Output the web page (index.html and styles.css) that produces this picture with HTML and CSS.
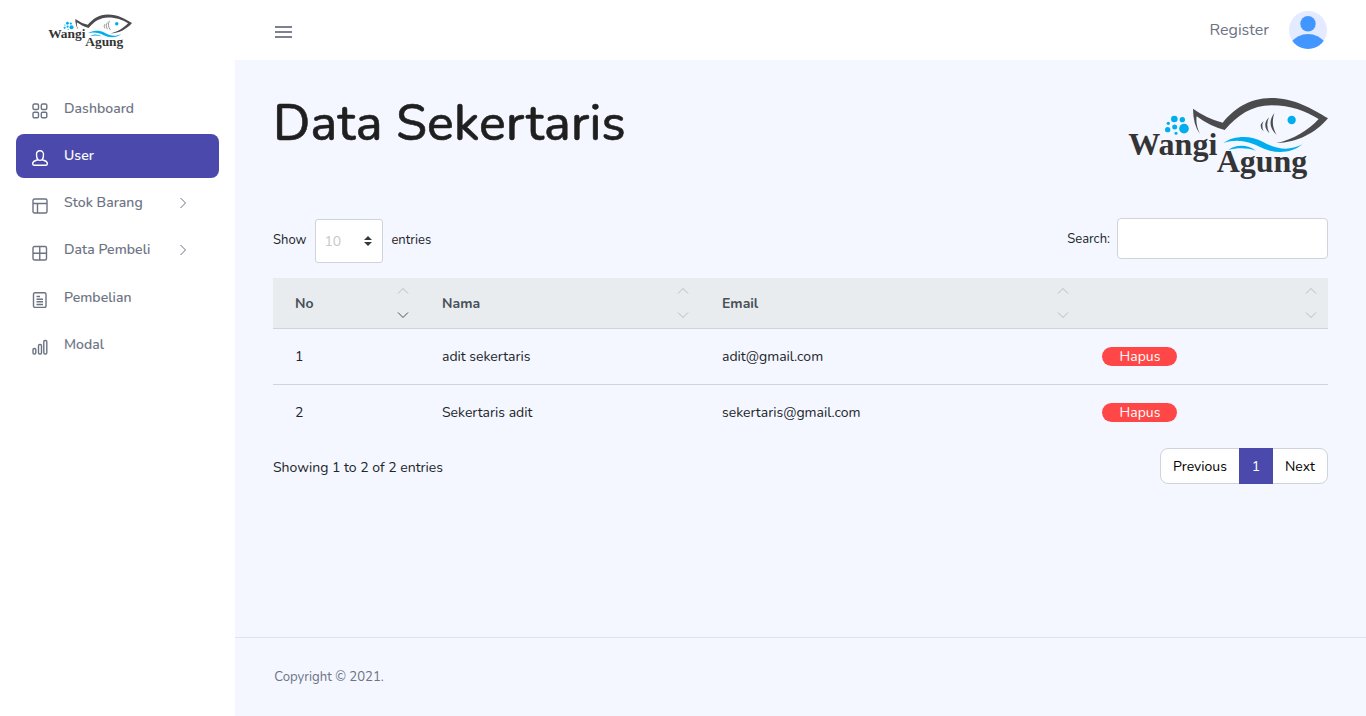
FILE: index.html
```html
<!DOCTYPE html>
<html lang="id">
<head>
<meta charset="utf-8">
<title>Data Sekertaris</title>
<link rel="stylesheet" href="styles.css">
</head>
<body>
<div class="app">
  <aside class="sidebar">
    <a class="brand"><svg width="84" height="34.500" viewBox="54 36 600 246">
      <path fill="#4b4b4d" d="M249 71Q291 101 338 113C370 73 418 39 482 39C553 39 604 70 654 100C619 142 562 174 499 174C553 163 594 136 626 102C583 77 544 61 484 61C426 61 382 91 344 135Q300 124 260 94Q256 118 270 147Q249 119 249 71Z"/>
      <path fill="none" stroke="#4b4b4d" stroke-width="4" d="M461 108Q448 123 461 139M477 97Q461 120 478 145M493 84Q475 119 500 150"/>
      <g fill="#00adef">
        <circle cx="545" cy="105" r="12.500"/>
        <circle cx="193" cy="102" r="10"/><circle cx="217" cy="104" r="8"/><circle cx="175" cy="115" r="5"/>
        <circle cx="173" cy="134" r="8"/><circle cx="194" cy="126" r="7.500"/><circle cx="222" cy="131" r="14.500"/><circle cx="198" cy="145" r="4.500"/>
        <path d="M340 174C370 151 423 150 458 170C500 193 536 199 577 178C545 206 493 208 452 187C414 167 379 161 340 174Z"/>
        <path d="M355 195C378 178 413 178 438 197C409 187 380 188 355 195Z"/>
      </g>
      <g class="logo-text">
        <text x="55" y="210" textLength="267" lengthAdjust="spacingAndGlyphs">Wangi</text>
        <text x="320" y="262" textLength="272" lengthAdjust="spacingAndGlyphs">Agung</text>
      </g>
    </svg></a>
    <nav class="menu">
      <a class="item"><svg class="icon" viewBox="0 0 16 16"><rect x="1" y="1" width="5.500" height="5.500" rx="1.300"/><rect x="9.300" y="1" width="5.500" height="5.500" rx="1.300"/><rect x="1" y="9.300" width="5.500" height="5.500" rx="1.300"/><rect x="9.300" y="9.300" width="5.500" height="5.500" rx="1.300"/></svg><span>Dashboard</span></a>
      <a class="item active"><svg class="icon" viewBox="0 0 16 16"><path d="M8 .8C5.600.8 4.500 2.400 4.500 4.700C4.500 6.800 5 8.400 5.700 9.500C5.700 10.300.6 10.500.6 13.400C.6 14.700 1.200 15.200 2.200 15.200H13.800C14.800 15.200 15.400 14.700 15.400 13.400C15.400 10.500 10.300 10.300 10.300 9.500C11 8.400 11.500 6.800 11.500 4.700C11.500 2.400 10.400.8 8 .8ZM5.700 9.500Q8 11.300 10.300 9.500"/></svg><span>User</span></a>
      <a class="item"><svg class="icon" viewBox="0 0 16 16"><rect x="1" y="1" width="14" height="14" rx="1.500"/><path d="M1 5.500H15M5.500 5.500V15"/></svg><span>Stok Barang</span><svg class="chev" viewBox="0 0 8 12"><path d="M1.500 1L6.500 6L1.500 11"/></svg></a>
      <a class="item"><svg class="icon" viewBox="0 0 16 16"><rect x="1" y="1.500" width="13.500" height="13.500" rx="1.500"/><path d="M1 8.200H14.500M7.750 1.500V15"/></svg><span>Data Pembeli</span><svg class="chev" viewBox="0 0 8 12"><path d="M1.500 1L6.500 6L1.500 11"/></svg></a>
      <a class="item"><svg class="icon" viewBox="0 0 16 16"><rect x="1.500" y=".8" width="12.500" height="14.700" rx="1.500"/><path d="M4.500 4.500H8M4.500 7.200H11M4.500 9.800H11M4.500 12.500H11"/></svg><span>Pembelian</span></a>
      <a class="item"><svg class="icon" viewBox="0 0 16 16"><rect x="1" y="9.500" width="2.800" height="5.500" rx="1.200"/><rect x="6.500" y="5.500" width="3" height="9.500" rx="1.200"/><rect x="11.800" y="1.500" width="3" height="13.500" rx="1.200"/></svg><span>Modal</span></a>
    </nav>
  </aside>

  <div class="main">
    <header class="topbar">
      <svg class="burger" viewBox="0 0 17 13"><path d="M0 1H17M0 6H17M0 11H17"/></svg>
      <div class="account">
        <a class="register">Register</a>
        <svg class="avatar" viewBox="0 0 38 38"><clipPath id="round"><circle cx="19" cy="19" r="19"/></clipPath><g clip-path="url(#round)"><rect width="38" height="38" fill="#e4eaff"/><circle cx="19" cy="12.700" r="7.700" fill="#4296ff"/><path fill="#4296ff" d="M1 32Q9 23 19 23T37 32V38H1Z"/></g></svg>
      </div>
    </header>

    <main class="content">
      <div class="heading">
        <h1>Data Sekertaris</h1>
        <svg width="200" height="82" viewBox="54 36 600 246">
          <path fill="#4b4b4d" d="M249 71Q291 101 338 113C370 73 418 39 482 39C553 39 604 70 654 100C619 142 562 174 499 174C553 163 594 136 626 102C583 77 544 61 484 61C426 61 382 91 344 135Q300 124 260 94Q256 118 270 147Q249 119 249 71Z"/>
          <path fill="#4b4b4d" d="M461 108Q443 123 461 139Q453 123 461 108ZM477 97Q454 120 478 145Q466 120 477 97ZM493 84Q467 119 500 150Q481 119 493 84Z"/>
          <g fill="#00adef">
            <circle cx="545" cy="105" r="12.500"/>
            <circle cx="193" cy="102" r="10"/><circle cx="217" cy="104" r="8"/><circle cx="175" cy="115" r="5"/>
            <circle cx="173" cy="134" r="8"/><circle cx="194" cy="126" r="7.500"/><circle cx="222" cy="131" r="14.500"/><circle cx="198" cy="145" r="4.500"/>
            <path d="M340 174C370 151 423 150 458 170C500 193 536 199 577 178C545 206 493 208 452 187C414 167 379 161 340 174Z"/>
            <path d="M355 195C378 178 413 178 438 197C409 187 380 188 355 195Z"/>
          </g>
          <g class="logo-text">
            <text x="55" y="210" textLength="267" lengthAdjust="spacingAndGlyphs">Wangi</text>
            <text x="320" y="262" textLength="272" lengthAdjust="spacingAndGlyphs">Agung</text>
          </g>
        </svg>
      </div>
      <div class="controls">
        <label class="length"><span>Show</span>
          <span class="select"><span>10</span><svg viewBox="0 0 8 10"><path d="M4 0L8 4H0ZM4 10L0 6H8Z"/></svg></span>
          <span>entries</span></label>
        <label class="search"><span>Search:</span><input type="text"></label>
      </div>
      <table>
        <colgroup><col class="c1"><col class="c2"><col class="c3"><col class="c4"></colgroup>
        <thead><tr>
          <th><div class="th"><span>No</span><svg class="sort asc" viewBox="0 0 12 32"><path class="up" d="M1 6.500L6 1.500L11 6.500"/><path class="down" d="M1 25.500L6 30.500L11 25.500"/></svg></div></th>
          <th><div class="th"><span>Nama</span><svg class="sort" viewBox="0 0 12 32"><path class="up" d="M1 6.500L6 1.500L11 6.500"/><path class="down" d="M1 25.500L6 30.500L11 25.500"/></svg></div></th>
          <th><div class="th"><span>Email</span><svg class="sort" viewBox="0 0 12 32"><path class="up" d="M1 6.500L6 1.500L11 6.500"/><path class="down" d="M1 25.500L6 30.500L11 25.500"/></svg></div></th>
          <th><div class="th"><span></span><svg class="sort" viewBox="0 0 12 32"><path class="up" d="M1 6.500L6 1.500L11 6.500"/><path class="down" d="M1 25.500L6 30.500L11 25.500"/></svg></div></th>
        </tr></thead>
        <tbody>
          <tr><td>1</td><td>adit sekertaris</td><td>adit@gmail.com</td><td><a class="hapus">Hapus</a></td></tr>
          <tr><td>2</td><td>Sekertaris adit</td><td>sekertaris@gmail.com</td><td><a class="hapus">Hapus</a></td></tr>
        </tbody>
      </table>
      <div class="bottom">
        <div class="info">Showing 1 to 2 of 2 entries</div>
        <div class="pages"><a class="prev">Previous</a><a class="current">1</a><a class="next">Next</a></div>
      </div>
    </main>
    <footer>Copyright © 2021.</footer>
  </div>
</div>
</body>
</html>
```
FILE: styles.css
```css
* { box-sizing: border-box; }
body { margin: 0; font-family: Nunito, Lato, sans-serif; font-size: 14px; color: #212529; background: #f4f7ff; }
.app { display: flex; height: 716px; overflow: hidden; }
.logo-text { font-family: "Liberation Serif", serif; font-weight: 700; font-size: 93px; fill: #343436; }

.sidebar { width: 235px; background: #fff; flex: none; }
.brand { display: flex; height: 60px; padding: 13.500px 0 0 47.600px; }
.brand svg { overflow: visible; }
.menu { display: flex; flex-direction: column; gap: 3.300px; padding: 26.700px 16px 0; }
.item { display: flex; align-items: center; height: 44px; padding: 0 16px; border-radius: 8px; color: #6c7383; font-size: 14px; font-weight: 500; line-height: 18px; }
.item span { margin: 0 0 .2px 16px; flex: 1; white-space: nowrap; letter-spacing: .08px; -webkit-text-stroke: .1px currentColor; }
.icon { width: 16px; height: 16px; margin-top: 4.500px; fill: none; stroke: currentColor; stroke-width: 1.400; }
.chev { width: 8px; height: 12px; margin: 0 16px 1px 0; fill: none; stroke: currentColor; stroke-width: 1; }
.active { background: #4b49ac; color: #fff; }

.main { flex: 1; display: flex; flex-direction: column; min-width: 0; }
.topbar { height: 60px; background: #fff; display: flex; justify-content: space-between; align-items: center; padding: 0 39px 0 40px; }
.burger { width: 17px; height: 13px; margin-top: 5px; fill: none; stroke: #7b8191; stroke-width: 2; }
.account { display: flex; align-items: center; gap: 20px; }
.register { font-size: 16px; color: #6c7383; }
.avatar { width: 38px; height: 38px; }

.content { flex: 1; padding: 37px 38px 0; }
.heading { display: flex; justify-content: space-between; height: 121px; }
h1 { margin: 0; color: #1f1f1f; font-size: 50px; line-height: 54px; font-weight: 500; letter-spacing: .26px; -webkit-text-stroke: .6px #1f1f1f; }
.controls { display: flex; justify-content: space-between; height: 60px; font-size: 13px; }
.controls label { display: flex; align-items: center; }
.length { height: 44px; margin-top: 1px; }
.length > span:first-child, .length > span:last-child { margin-bottom: 2px; }
.select { display: flex; align-items: center; justify-content: space-between; width: 68px; height: 44px; margin: 0 8px 0 9px; padding: 0 10px 0 8px; background: #fff; border: 1px solid #ced4da; border-radius: 3px; color: #c9c8c8; font-size: 14px; }
.select svg { width: 8px; height: 10px; fill: #343a40; }
.search { height: 41px; gap: 7px; }
.search input { width: 211px; height: 41px; border: 1px solid #ced4da; border-radius: 4px; background: #fff; }

table { width: 1055px; table-layout: fixed; border-collapse: separate; border-spacing: 0; }
.c1 { width: 147px; } .c2 { width: 280px; } .c3 { width: 380px; } .c4 { width: 248px; }
th { height: 51px; padding: 0; background: #e8ecef; border-bottom: 1px solid #ced4da; color: #495057; font-weight: 700; text-align: left; }
.th { display: flex; align-items: center; justify-content: space-between; padding: 0 11.500px 0 22px; }
.sort { width: 12px; height: 32px; margin: .4px 0 -.4px; fill: none; stroke: #495057; stroke-width: 1; }
.sort path { opacity: .3; }
.asc .down { opacity: 1; }
td { height: 56px; padding: 0 22px; border-bottom: 1px solid #ced4da; line-height: 18px; }
tr:last-child td { height: 55px; border: 0; }
.hapus { display: block; width: 75px; height: 19px; padding-left: 1px; border-radius: 10px; background: #ff4747; color: #fff; text-align: center; line-height: 19px; }
.bottom { display: flex; justify-content: space-between; margin-top: 8px; height: 36px; }
.info { line-height: 39px; }
.pages { display: flex; width: 168px; height: 36px; border: 1px solid #ced4da; border-radius: 8px; background: #fff; color: #000; line-height: 35px; text-align: center; }
.prev { width: 78px; }
.current { width: 34px; height: 36px; margin-top: -1px; line-height: 37px; background: #4b49ac; color: #fff; }
.next { flex: 1; }
footer { height: 79px; border-top: 1px solid #dfe3ec; padding: 29px 39.300px; color: #6c7383; font-size: 13.150px; line-height: 20px; }
```
